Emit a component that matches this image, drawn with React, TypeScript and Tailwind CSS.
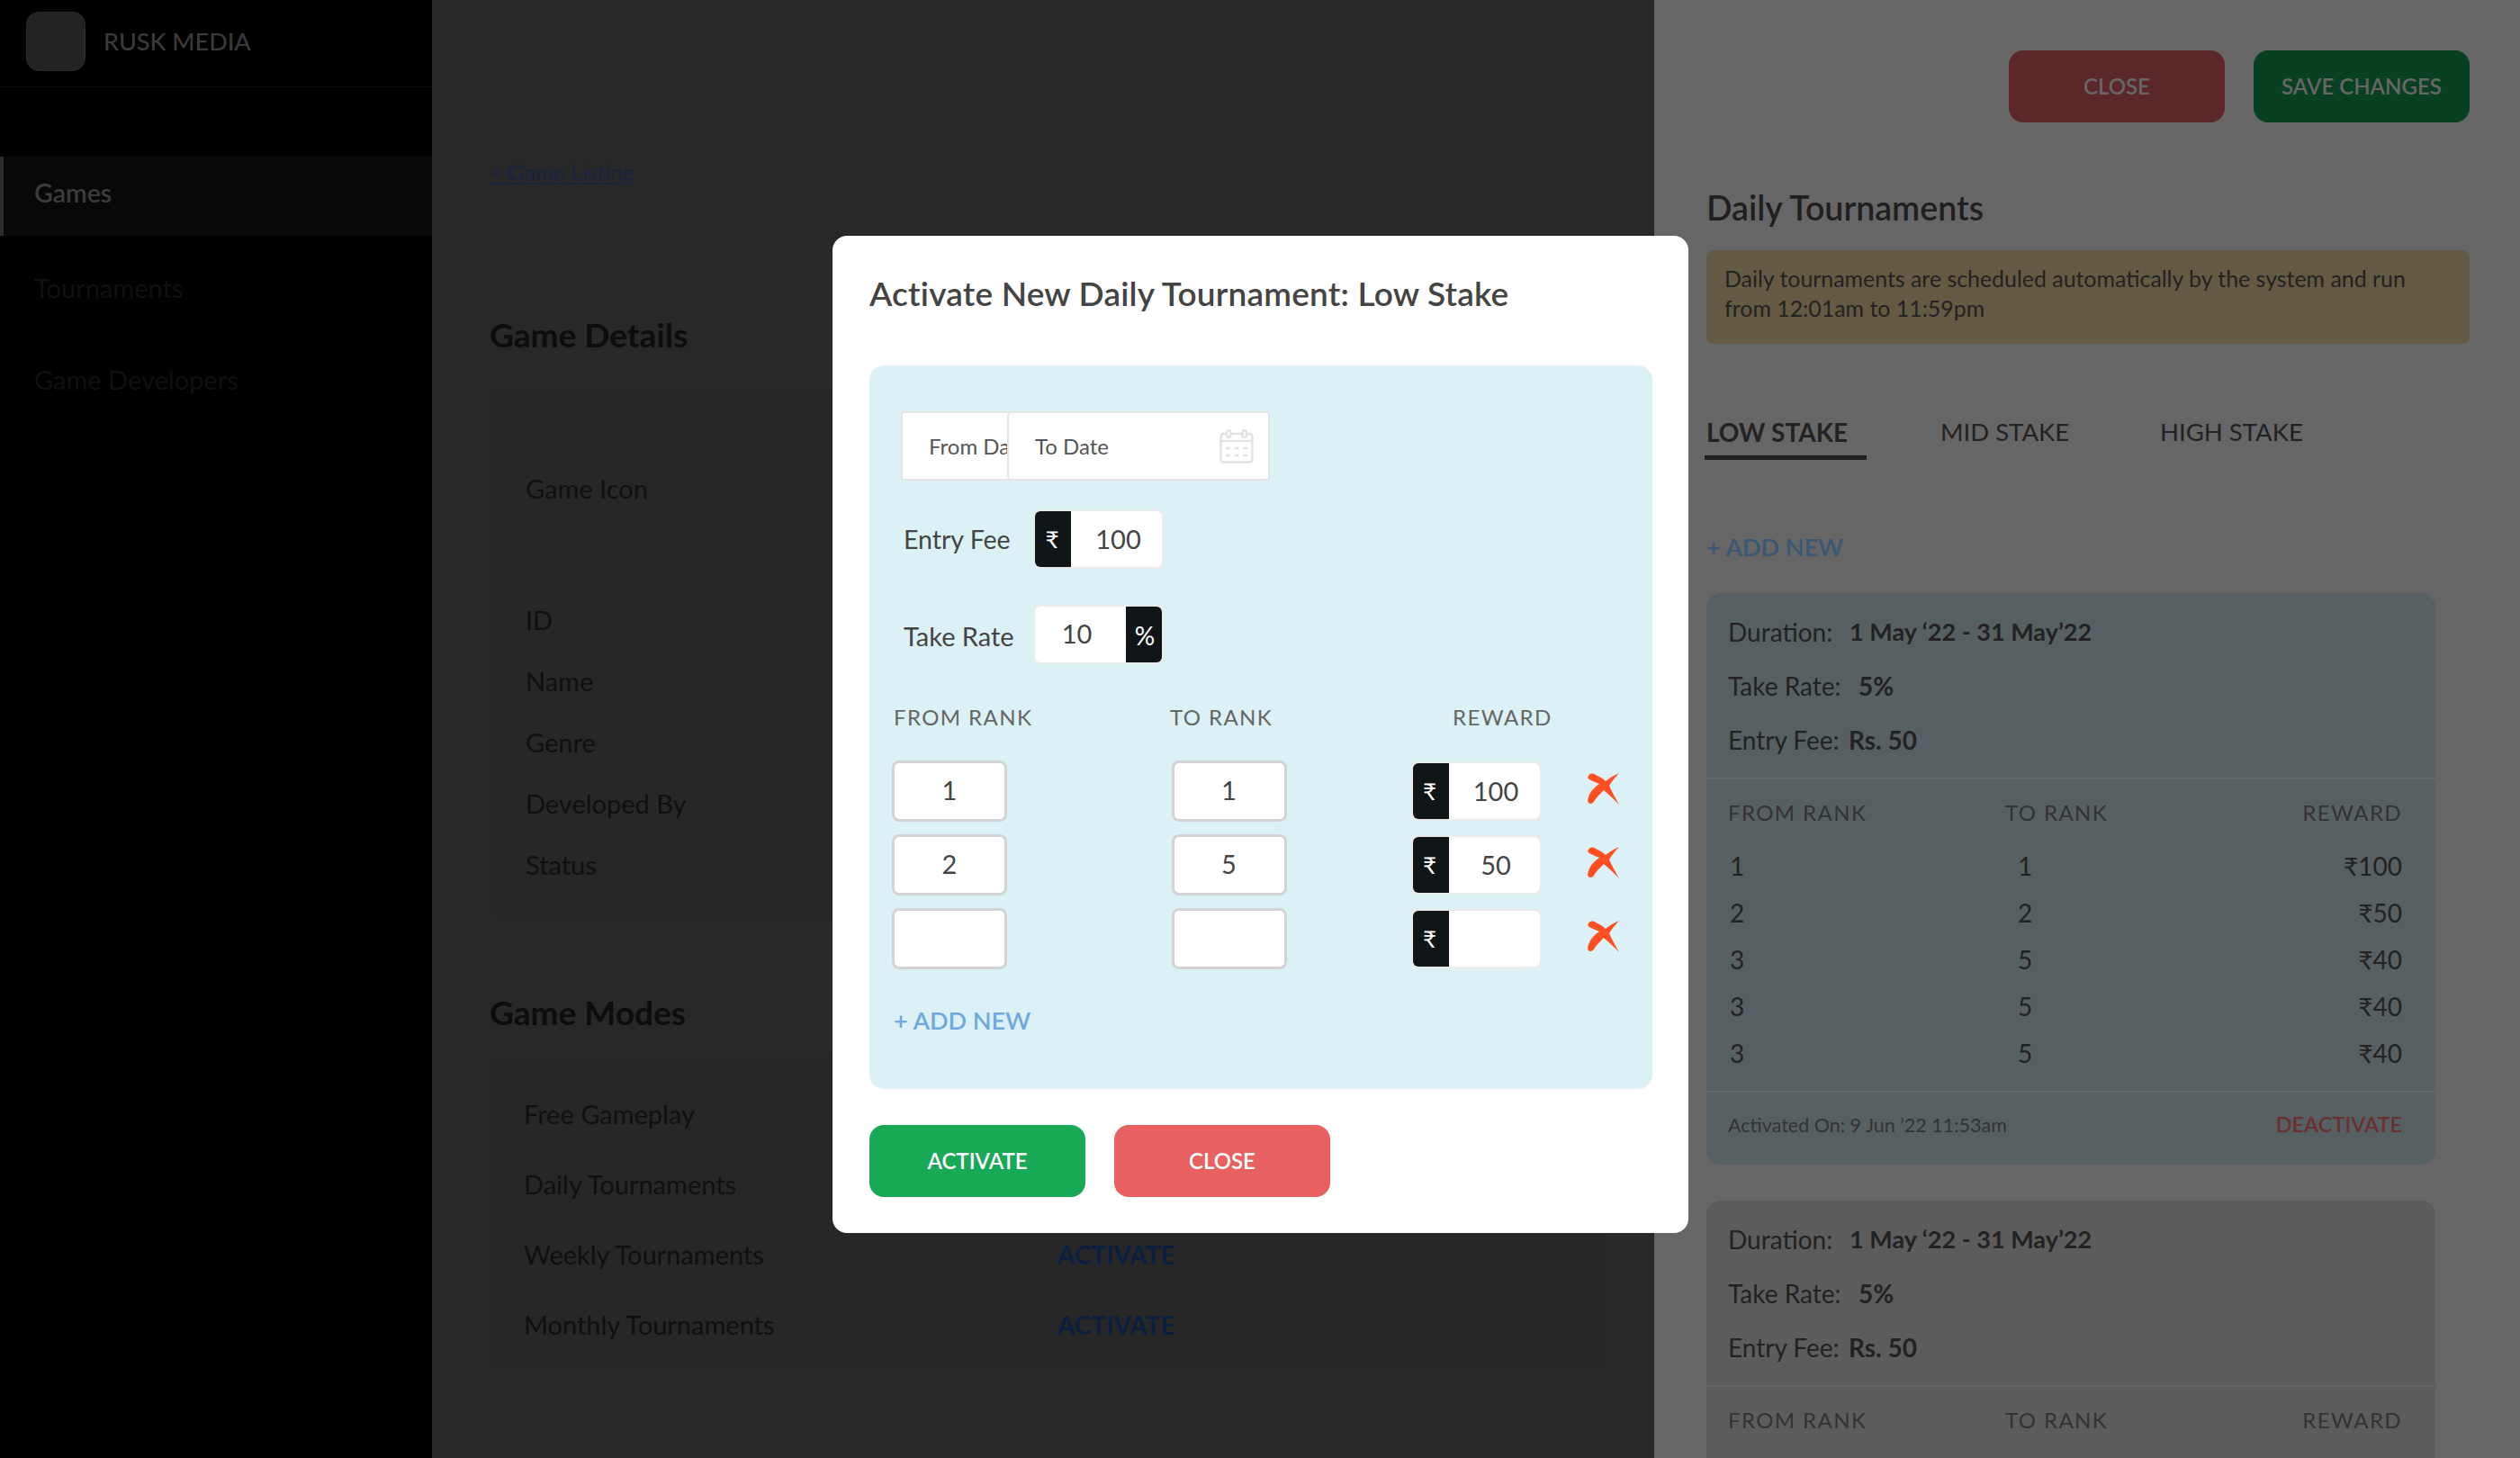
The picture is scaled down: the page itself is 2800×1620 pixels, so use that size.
const font = "font-['Lato','Noto_Sans',sans-serif]";

function Cross() {
  return (
    <svg width="36" height="36" viewBox="0 0 36 36" fill="#ff4f22">
      <path d="M1 3C3 0 6 0 9 2C13 4 17 6 20 9C25 5 30 2 35 0C31 4 27 9 24 14C27 21 31 28 35 35C30 30 24 24 18 19C14 23 10 27 8 30C6 34 3 35 1 33C-1 31 1 26 3 22C5 18 9 15 13 12C9 10 5 9 2 7C0 6 0 4 1 3Z" />
    </svg>
  );
}

function Calendar() {
  return (
    <svg width="38" height="38" viewBox="0 0 38 38" fill="none" stroke="#e2e2e2" strokeWidth="2.4">
      <rect x="1.5" y="5" width="35" height="31.5" rx="3" />
      <path d="M1.5 13H36.5" />
      <rect x="8" y="1.2" width="4.5" height="7.5" rx="2" fill="#fff" />
      <rect x="25.5" y="1.2" width="4.5" height="7.5" rx="2" fill="#fff" />
      <path d="M7 21H12M16.5 21H21.5M26 21H31M7 29H12M16.5 29H21.5M26 29H31" />
    </svg>
  );
}

function RupeeInput({ value }: { value: string }) {
  return (
    <div className="flex h-[66px] w-[145px] overflow-hidden rounded-[8px] border-2 border-[#ebebeb] bg-white">
      <div className="-m-[2px] mr-0 flex w-[42px] items-center justify-center bg-[#101518] text-[26px] text-white">₹</div>
      <div className="flex-1 pl-[4px] text-center text-[29px] leading-[62px] text-[#444]">{value}</div>
    </div>
  );
}

function RankBox({ value }: { value: string }) {
  return (
    <div className="h-[68px] w-[128px] rounded-[8px] border-[3px] border-[#d3d3d5] bg-white text-center text-[29px] leading-[60px] text-[#444]">
      {value}
    </div>
  );
}

function ModalRow({ from, to, reward }: { from: string; to: string; reward: string }) {
  return (
    <div className="grid h-[68px] grid-cols-[310.5px_266px_196.5px_36px] items-center">
      <RankBox value={from} />
      <RankBox value={to} />
      <RupeeInput value={reward} />
      <div className="-mt-[5px]">
        <Cross />
      </div>
    </div>
  );
}

function Modal() {
  return (
    <div className="absolute left-[925px] top-[262px] h-[1108px] w-[951px] rounded-[16px] bg-white pl-[41px] pt-[40px]">
      <div className="h-[48px] text-[37px] font-semibold leading-[48px] tracking-[0.2px] text-[#444]">Activate New Daily Tournament: Low Stake</div>
      <div className="mt-[56px] h-[804px] w-[870px] rounded-[16px] bg-[#dcf1f5] pl-[25px] pt-[51px]">
        <div className="ml-[10px] flex h-[77px] w-[410px] overflow-hidden rounded-[4px] border-2 border-[#e5e5e5] bg-white">
          <div className="w-[116px] overflow-hidden whitespace-nowrap pl-[29px] text-[24px] leading-[73px] text-[#555]">From Date</div>
          <div className="flex flex-1 items-center justify-between rounded-[4px] border-l-2 border-[#e5e5e5] pl-[29px] pr-[16px] text-[24px] text-[#555]">
            <span>To Date</span>
            <Calendar />
          </div>
        </div>
        <div className="ml-[13px] mt-[32px] flex h-[66px] items-center">
          <div className="w-[144px] text-[28.5px] text-[#444]">Entry Fee</div>
          <RupeeInput value="100" />
        </div>
        <div className="ml-[13px] mt-[40px] flex h-[66px] items-center">
          <div className="w-[144px] pt-[4px] text-[29px] text-[#444]">Take Rate</div>
          <div className="flex h-[66px] w-[145px] overflow-hidden rounded-[8px] border-2 border-[#ebebeb] bg-white">
            <div className="flex-1 pr-[8px] text-center text-[29px] leading-[60px] text-[#444]">10</div>
            <div className="-m-[2px] ml-0 flex w-[42px] items-center justify-center bg-[#101518] pt-[2px] text-[28px] font-normal text-white">%</div>
          </div>
        </div>
        <div className="mt-[43px] grid h-[32px] grid-cols-[309px_314px_auto] text-[24px] leading-[32px] tracking-[1.4px] text-[#666]">
          <div className="pl-[2px]">FROM RANK</div>
          <div>TO RANK</div>
          <div>REWARD</div>
        </div>
        <div className="mt-[32px] flex flex-col gap-[14px]">
          <ModalRow from="1" to="1" reward="100" />
          <ModalRow from="2" to="5" reward="50" />
          <ModalRow from="" to="" reward="" />
        </div>
        <div className="ml-[2px] mt-[39px] h-[36px] text-[27px] font-semibold leading-[36px] text-[#6fa9dd]">+ ADD NEW</div>
      </div>
      <div className="mt-[40px] flex gap-[32px]">
        <div className="h-[80px] w-[240px] rounded-[16px] bg-[#18a957] text-center text-[24px] font-semibold leading-[80px] text-white">ACTIVATE</div>
        <div className="h-[80px] w-[240px] rounded-[16px] bg-[#e96060] text-center text-[24px] font-semibold leading-[80px] text-white">CLOSE</div>
      </div>
    </div>
  );
}

function Sidebar() {
  return (
    <div className="h-full w-[480px] shrink-0 bg-black">
      <div className="flex h-[97px] items-center border-b border-[#0a0a0a] pb-[4px] pl-[29px]">
        <div className="h-[66px] w-[66px] rounded-[14px] border border-[#2a2a2a] bg-[#232323]" />
        <div className="ml-[20px] text-[27px] font-medium text-[#3a3a3a]">RUSK MEDIA</div>
      </div>
      <div className="mt-[77px] h-[88px] border-l-4 border-[#2e2e2e] bg-[#080808] pl-[34px] text-[28.5px] font-semibold leading-[80px] text-[#3c3c3c]">Games</div>
      <div className="mt-[14px] pl-[38px] text-[29px] leading-[88px] text-[#101010]">Tournaments</div>
      <div className="mt-[14px] pl-[38px] text-[29px] leading-[88px] text-[#101010]">Game Developers</div>
    </div>
  );
}

function MainColumn() {
  const details = ["ID", "Name", "Genre", "Developed By", "Status"];
  const modes = ["Free Gameplay", "Daily Tournaments", "Weekly Tournaments", "Monthly Tournaments"];
  return (
    <div className="h-full w-[1358px] shrink-0 bg-[#282828] pl-[64px] pt-[176px] text-[#101010]">
      <div className="h-[32px] text-[24.5px] leading-[32px] text-[#1a2340] underline">&lt; Game Listing</div>
      <div className="mt-[142px] h-[44px] text-[37px] font-bold leading-[44px] text-[#0d0d0d]">Game Details</div>
      <div className="mt-[39px] h-[585px] w-[1240px] rounded-[16px] bg-[#272727] pl-[40px] pt-[92px]">
        <div className="h-[36px] text-[29px] leading-[36px]">Game Icon</div>
        <div className="mt-[94px]">
          {details.map((d) => (
            <div key={d} className="h-[68px] text-[29px] leading-[68px]">{d}</div>
          ))}
        </div>
      </div>
      <div className="mt-[85px] h-[44px] text-[37px] font-bold leading-[44px] text-[#0d0d0d]">Game Modes</div>
      <div className="mt-[28px] h-[345px] w-[1240px] rounded-[16px] bg-[#272727] pl-[38px] pt-[24px]">
        {modes.map((m, i) => (
          <div key={m} className="flex h-[78px] items-center text-[29px]">
            <div className="w-[593px]">{m}</div>
            {i > 1 && <div className="text-[28px] font-bold text-[#0b1f40]">ACTIVATE</div>}
          </div>
        ))}
      </div>
    </div>
  );
}

function TournamentCard({ bg, line }: { bg: string; line: string }) {
  const rows = [["1", "1", "₹100"], ["2", "2", "₹50"], ["3", "5", "₹40"], ["3", "5", "₹40"], ["3", "5", "₹40"]];
  return (
    <div className={`w-[810px] rounded-[16px] text-[#222] ${bg}`}>
      <div className="px-[24px] pb-[12px] pt-[13px] text-[28px]">
        <div className="flex h-[60px] items-center"><span className="w-[135px]">Duration:</span><b className="text-[27px] font-bold">1 May ‘22 - 31 May’22</b></div>
        <div className="flex h-[60px] items-center"><span className="w-[145px]">Take Rate:</span><b className="text-[28px] font-bold">5%</b></div>
        <div className="flex h-[60px] items-center"><span className="w-[134px]">Entry Fee:</span><b className="text-[28px] font-bold">Rs. 50</b></div>
      </div>
      <div className={`border-t-2 pb-[16px] pl-[24px] pr-[37px] pt-[17px] ${line}`}>
        <div className="grid h-[40px] grid-cols-[308px_1fr_auto] text-[24px] leading-[40px] tracking-[1.4px] text-[#333]">
          <div>FROM RANK</div>
          <div>TO RANK</div>
          <div>REWARD</div>
        </div>
        <div className="mt-[13px]">
          {rows.map((r, i) => (
            <div key={i} className="grid h-[52px] grid-cols-[320px_1fr_auto] pl-[2px] text-[28px] leading-[52px]">
              <div>{r[0]}</div>
              <div>{r[1]}</div>
              <div>{r[2]}</div>
            </div>
          ))}
        </div>
      </div>
      <div className={`flex h-[82px] items-center justify-between border-t-2 pb-[8px] pl-[24px] pr-[37px] ${line}`}>
        <span className="text-[21.5px] text-[#333]">Activated On: 9 Jun ’22 11:53am</span>
        <span className="text-[23.5px] font-semibold text-[#6b2f2f]">DEACTIVATE</span>
      </div>
    </div>
  );
}

function RightPanel() {
  return (
    <div className="h-full flex-1 bg-[#666] pl-[58px] pt-[56px]">
      <div className="flex justify-end gap-[32px] pr-[56px]">
        <div className="h-[80px] w-[240px] rounded-[16px] bg-[#5b2728] text-center text-[24px] font-semibold leading-[80px] text-[#666]">CLOSE</div>
        <div className="h-[80px] w-[240px] rounded-[16px] bg-[#094021] text-center text-[24px] font-semibold leading-[80px] text-[#666]">SAVE CHANGES</div>
      </div>
      <div className="mt-[73px] h-[44px] text-[37.5px] font-semibold leading-[44px] text-[#1f1f1f]">Daily Tournaments</div>
      <div className="mt-[25px] h-[104px] w-[848px] rounded-[8px] bg-[#645a44] px-[20px] pt-[15px] text-[24.9px] leading-[33px] text-[#222]">
        Daily tournaments are scheduled automatically by the system and run from 12:01am to 11:59pm
      </div>
      <div className="mt-[80px] flex h-[49px] text-[27.5px] leading-[36px] text-[#222]">
        <div className="-ml-[2px] w-[180px] border-b-[5px] border-[#1f1f1f] pl-[2px] text-[28px] font-bold">LOW STAKE</div>
        <div className="ml-[82px] w-[244px]">MID STAKE</div>
        <div>HIGH STAKE</div>
      </div>
      <div className="mt-[79px] h-[36px] text-[27px] font-semibold leading-[36px] text-[#3a5773]">+ ADD NEW</div>
      <div className="mt-[33px] flex flex-col gap-[40px]">
        <TournamentCard bg="bg-[#566063]" line="border-[#606a6c]" />
        <TournamentCard bg="bg-[#5c5c5c]" line="border-[#646464]" />
      </div>
    </div>
  );
}

export default function App() {
  return (
    <div className={`relative flex h-[1620px] w-[2800px] overflow-hidden ${font}`}>
      <Sidebar />
      <MainColumn />
      <RightPanel />
      <Modal />
    </div>
  );
}
